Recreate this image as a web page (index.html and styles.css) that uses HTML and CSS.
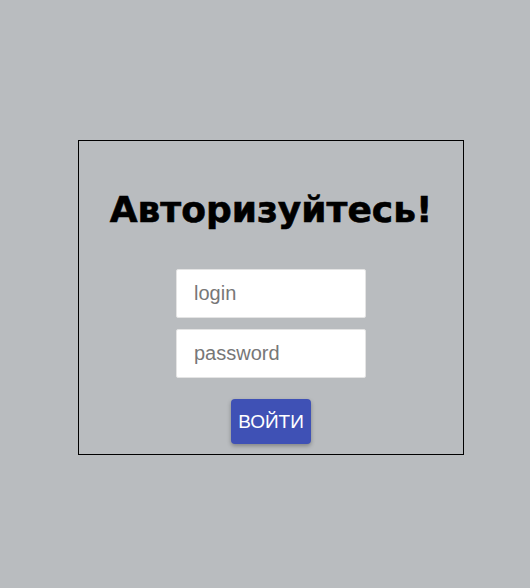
FILE: index.html
```html
<!DOCTYPE html>
<html lang="ru">
<head>
  <meta charset="UTF-8">
  <meta name="viewport" content="width=device-width, initial-scale=1.0">
  <title>Авторизация</title>
  <link rel="stylesheet" href="styles.css">
</head>
<body>
  <div class="login-box">
    <h1>Авторизуйтесь!</h1>
    <form class="login-form">
      <input type="text" placeholder="login">
      <input type="password" placeholder="password">
      <button type="submit">Войти</button>
    </form>
  </div>
</body>
</html>
```

FILE: styles.css
```css
body {
  margin: 0;
  background: #b9bcbf;
  font-family: "Liberation Sans", Arial, sans-serif;
}
.login-box {
  width: 384px;
  height: 313px;
  margin: 140px 0 0 78px;
  border: 1px solid #000;
  box-sizing: content-box;
  display: flex;
  flex-direction: column;
  align-items: center;
}
.login-box h1 {
  margin: 45px 0 0;
  font-family: "DejaVu Sans", sans-serif;
  font-size: 36px;
  font-weight: 900;
  line-height: 48px;
  color: #000;
  -webkit-text-stroke: 0.6px #000;
}
.login-form {
  margin-top: 35px;
  display: flex;
  flex-direction: column;
  align-items: center;
  gap: 11px;
}
.login-form input {
  width: 190px;
  height: 49px;
  box-sizing: border-box;
  padding: 0 17px;
  border: 1px solid #e4e4e4;
  border-radius: 2px;
  background: #fff;
  font-family: "Liberation Sans", Arial, sans-serif;
  font-size: 20px;
  color: #333;
  outline: none;
}
.login-form input::placeholder {
  color: #777;
}
.login-form button {
  margin-top: 10px;
  width: 80px;
  height: 45px;
  border: none;
  border-radius: 4px;
  background: #3f51b5;
  color: #fff;
  font-family: "Liberation Sans", Arial, sans-serif;
  font-size: 19px;
  text-transform: uppercase;
  box-shadow: 0 2px 4px rgba(0, 0, 0, 0.3);
  cursor: pointer;
}
```
